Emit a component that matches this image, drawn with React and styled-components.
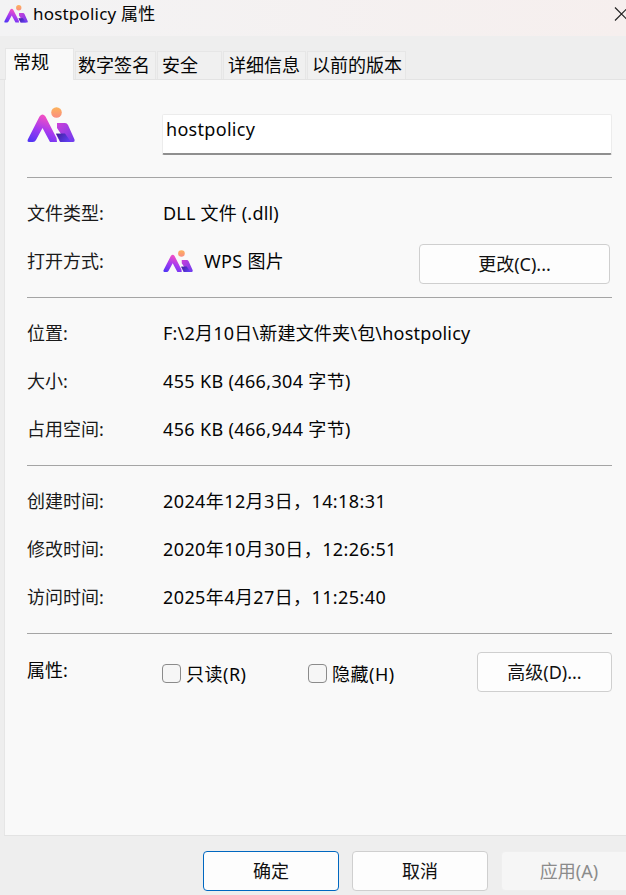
import React from 'react';
import styled, { createGlobalStyle } from 'styled-components';

const Global = createGlobalStyle`
  html, body { margin: 0; padding: 0; background: #eeeeee; }
  body { font-family: "Noto Sans", "Noto Sans CJK SC", sans-serif; font-size: 18px; color: #050505; }
`;
const Window = styled.div`
  width: 626px; height: 895px; display: flex; flex-direction: column; overflow: hidden; background: #eee;
`;
const TitleBar = styled.div`
  height: 36px; flex: none; display: flex; align-items: center; justify-content: space-between;
  background: linear-gradient(90deg, #f3f3f4, #f6efee); padding-left: 4px; font-size: 17px; letter-spacing: 0.2px;
`;
const TitleLeft = styled.div`display: flex; align-items: center; gap: 5px; line-height: 28px; margin-top: -9px;`;
const Close = styled.svg`width: 12px; height: 15px; margin-top: -9px; flex: none;`;
const TabStrip = styled.div`
  height: 44px; flex: none; display: flex; align-items: flex-end; padding-left: 5px; gap: 1px;
  box-sizing: border-box; border-bottom: 1px solid #e3e3e3;
`;
const Tab = styled.div`
  box-sizing: border-box; width: ${p => p.$w}px; height: ${p => p.$active ? 32 : 28}px;
  background: ${p => p.$active ? '#f9f9f9' : '#f0f0f0'};
  border: 1px solid #e6e6e6; border-bottom: 0; padding-left: ${p => p.$pad}px;
  line-height: ${p => p.$active ? 26 : 27}px; white-space: nowrap;
  margin-bottom: ${p => p.$active ? -1 : 0}px; position: relative;
`;
const Panel = styled.div`
  flex: 1; margin-left: 4px; background: #f9f9f9; border-left: 1px solid #e6e6e6; padding: 0 14px 0 22px;
  box-sizing: border-box; border-bottom: 1px solid #e3e3e3; min-height: 0;
`;
const Head = styled.div`height: 98px; display: flex; align-items: flex-start; box-sizing: border-box; padding-top: 27px; border-bottom: 1px solid #a5a5a5;`;
const NameInput = styled.div`
  box-sizing: border-box; margin-left: 87px; margin-top: 7px; width: 450px; height: 41px; background: #fff;
  border: 1px solid #ececec; border-bottom: 2px solid #8f8f8f; padding-left: 3px; line-height: 29px; border-radius: 2px;
  letter-spacing: 0.3px;
`;
const Section = styled.div`
  display: flex; flex-direction: column; padding: 11px 0 12px; border-bottom: 1px solid #a5a5a5;
`;
const Row = styled.div`
  display: grid; grid-template-columns: 136px 1fr; align-items: center; height: 48px; line-height: 48px;
`;
const Label = styled.div`color: #1a1a1a;`;
const Value = styled.div`letter-spacing: ${p => p.$ls || 0}px; white-space: nowrap;`;
const OpenWith = styled.div`display: flex; align-items: center; height: 48px;`;
const AppName = styled.div`margin-left: 11px; flex: 1; letter-spacing: 0.3px;`;
const Button = styled.div`
  box-sizing: border-box; width: ${p => p.$w}px; height: 40px; flex: none; display: flex;
  align-items: center; justify-content: center; background: ${p => p.$disabled ? '#f6f6f6' : '#fdfdfd'};
  border: 1px solid ${p => p.$primary ? '#0067c0' : p.$disabled ? '#efefef' : '#cfcfcf'}; border-radius: 4px;
  color: ${p => p.$disabled ? '#8b8b8b' : '#111'}; line-height: 1;
`;
const ChangeButton = styled(Button)`margin: 6px 2px 0 0;`;
const AttrRow = styled.div`display: flex; align-items: flex-start; padding-top: 18px;`;
const AttrLabel = styled.div`width: 135px; line-height: 36px;`;
const Check = styled.div`display: flex; align-items: center; width: ${p => p.$w}px; height: 42px; gap: 5px; letter-spacing: 0.5px;`;
const Box = styled.span`
  width: 19px; height: 19px; box-sizing: border-box; border: 1px solid #8b8b8b; border-radius: 4px; background: #f6f6f6; flex: none;
`;
const Footer = styled.div`
  height: 59px; box-sizing: border-box; flex: none; display: flex; align-items: flex-start; padding: 15px 0 0 203px; gap: 13px; background: #eee;
`;

const Logo = ({ size = 48, id = 'a' }) => (
  <svg width={size} height={size * 36 / 48} viewBox="0 0 48 36" style={{ flex: 'none', display: 'block' }}>
    <defs>
      <linearGradient id={id + 'g'} x1="0" y1="1" x2="0.4" y2="0">
        <stop offset="0" stopColor="#4a35f5" />
        <stop offset="0.55" stopColor="#a63af0" />
        <stop offset="1" stopColor="#f04fc4" />
      </linearGradient>
      <linearGradient id={id + 's'} x1="0" y1="0" x2="0" y2="1">
        <stop offset="0" stopColor="#fdb35a" />
        <stop offset="1" stopColor="#f98d82" />
      </linearGradient>
      <linearGradient id={id + 'r'} x1="0" y1="0" x2="1" y2="1">
        <stop offset="0" stopColor="#d040d8" />
        <stop offset="1" stopColor="#6a3cf0" />
      </linearGradient>
      <linearGradient id={id + 'd'} x1="0" y1="0" x2="1" y2="0.5">
        <stop offset="0" stopColor="#2a1a8c" />
        <stop offset="1" stopColor="#5a3cf0" />
      </linearGradient>
    </defs>
    <circle cx="29.5" cy="5.5" r="5.3" fill={`url(#${id}s)`} />
    <path d="M0.8 32.5 L12.5 9.5 Q15.5 5.5 18.5 9.5 L29.5 31 L30 35 L23 35 L15.5 21 L9 33 Q8 35 6 35 L2 35 Q0 35 0.8 32.5 Z" fill={`url(#${id}g)`} />
    <path d="M30 16 L38 16 Q40 16 41 18 L47.5 32.5 Q48 35 46 35 L33 35 L29 27 L34 27 L30 21 Z" fill={`url(#${id}r)`} />
    <path d="M29 26.5 L38 26.5 L44 35 L33.5 35 Z" fill={`url(#${id}d)`} opacity="0.85" />
  </svg>
);

export default function App() {
  return (
    <Window>
      <Global />
      <TitleBar>
        <TitleLeft><Logo size={24} id="t" /><span>hostpolicy 属性</span></TitleLeft>
        <Close viewBox="0 0 12 15"><path d="M1 1.5 L14 14.5 M14 1.5 L1 14.5" stroke="#222" strokeWidth="1.2" fill="none" /></Close>
      </TitleBar>
      <TabStrip>
        <Tab $active $w={69} $pad={7}>常规</Tab>
        <Tab $w={81} $pad={2}>数字签名</Tab>
        <Tab $w={65} $pad={4}>安全</Tab>
        <Tab $w={83} $pad={4}>详细信息</Tab>
        <Tab $w={99} $pad={4}>以前的版本</Tab>
      </TabStrip>
      <Panel>
        <Head>
          <Logo size={48} id="m" />
          <NameInput>hostpolicy</NameInput>
        </Head>
        <Section>
          <Row><Label>文件类型:</Label><Value $ls={0.2}>DLL 文件 (.dll)</Value></Row>
          <Row>
            <Label>打开方式:</Label>
            <OpenWith>
              <Logo size={30} id="w" />
              <AppName>WPS 图片</AppName>
              <ChangeButton $w={191}>更改(C)...</ChangeButton>
            </OpenWith>
          </Row>
        </Section>
        <Section>
          <Row><Label>位置:</Label><Value $ls={0.2}>F:\2月10日\新建文件夹\包\hostpolicy</Value></Row>
          <Row><Label>大小:</Label><Value $ls={0.35}>455 KB (466,304 字节)</Value></Row>
          <Row><Label>占用空间:</Label><Value $ls={0.35}>456 KB (466,944 字节)</Value></Row>
        </Section>
        <Section>
          <Row><Label>创建时间:</Label><Value $ls={0.4}>2024年12月3日，14:18:31</Value></Row>
          <Row><Label>修改时间:</Label><Value $ls={0.4}>2020年10月30日，12:26:51</Value></Row>
          <Row><Label>访问时间:</Label><Value $ls={0.4}>2025年4月27日，11:25:40</Value></Row>
        </Section>
        <AttrRow>
          <AttrLabel>属性:</AttrLabel>
          <Check $w={146}><Box />只读(R)</Check>
          <Check $w={169}><Box />隐藏(H)</Check>
          <Button $w={135}>高级(D)...</Button>
        </AttrRow>
      </Panel>
      <Footer>
        <Button $w={136} $primary>确定</Button>
        <Button $w={136}>取消</Button>
        <Button $w={136} $disabled>应用(A)</Button>
      </Footer>
    </Window>
  );
}
